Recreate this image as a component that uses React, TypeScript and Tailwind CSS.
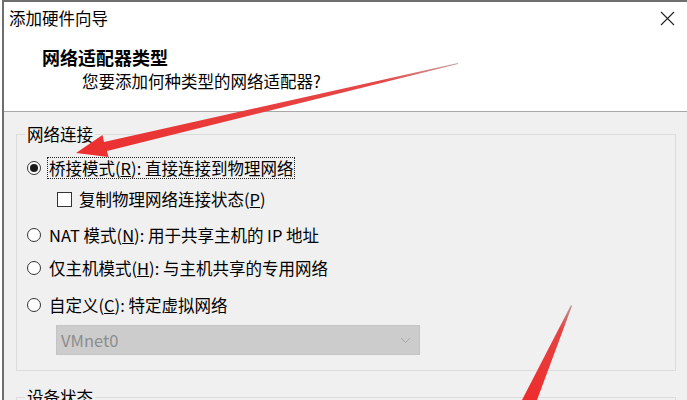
import React from 'react';

const Radio = ({ checked }: { checked?: boolean }) => (
  <span className="w-[14px] h-[14px] rounded-full border border-[#333] bg-white flex items-center justify-center shrink-0">
    {checked && <span className="w-[8px] h-[8px] rounded-full bg-[#1a1a1a]" />}
  </span>
);

const Arrows = () => (
  <svg className="absolute inset-0 pointer-events-none" width="687" height="400" viewBox="0 0 687 400">
    <defs>
      <linearGradient id="a1" x1="458" y1="63" x2="80" y2="150" gradientUnits="userSpaceOnUse">
        <stop offset="0" stopColor="#c9a0a0" />
        <stop offset="0.2" stopColor="#e54848" />
        <stop offset="1" stopColor="#ec2f2f" />
      </linearGradient>
      <linearGradient id="a2" x1="571" y1="305" x2="528" y2="400" gradientUnits="userSpaceOnUse">
        <stop offset="0" stopColor="#b79a9a" />
        <stop offset="0.25" stopColor="#e54343" />
        <stop offset="1" stopColor="#ee2c2c" />
      </linearGradient>
    </defs>
    {/* arrow pointing at bridge mode */}
    <polygon
      points="458,63 458,64 107,151 108.5,157 76,153 102.5,135 104,142"
      fill="url(#a1)"
    />
    {/* second arrow from bottom */}
    <polygon points="571,305 572,306 537,400 522,400" fill="url(#a2)" />
  </svg>
);

export default function App() {
  return (
    <div className="relative w-[687px] h-[400px] overflow-hidden bg-white text-black font-['Noto_Sans_CJK_SC','Noto_Sans',sans-serif]">
      <div className="ml-[2px] h-full border-l-2 border-t-2 border-[#6e6e6e] flex flex-col">
        {/* header */}
        <div className="h-[110px] bg-white border-b border-[#a8a8a8] shrink-0">
          <div className="h-[32px] flex items-center justify-between pl-[5px] pr-[12px]">
            <span className="text-[16.5px] leading-[20px]">添加硬件向导</span>
            <svg width="15" height="15" viewBox="0 0 15 15" className="mt-[1px]">
              <path d="M1 1 L14 14 M14 1 L1 14" stroke="#222" strokeWidth="1.1" />
            </svg>
          </div>
          <div className="pl-[38px] pt-[12px] text-[18px] leading-[22px] font-bold">网络适配器类型</div>
          <div className="pl-[78px] pt-[2px] text-[16.5px] leading-[22px]">您要添加何种类型的网络适配器?</div>
        </div>

        {/* body */}
        <div className="flex-1 bg-[#f0f0f0] pl-[12px] pr-[11px] pt-[12px] text-[16.5px] leading-[20px]">
          <fieldset className="border border-[#dcdcdc] pl-[10px] pb-[15px]">
            <legend className="ml-[-2px] px-[2px] bg-[#f0f0f0]">网络连接</legend>

            <div className="mt-[13px] h-[22px] flex items-center">
              <Radio checked />
              <span className="ml-[6px] px-[1px] border border-dotted border-[#222]">
                桥接模式(<span className="underline">R</span>): 直接连接到物理网络
              </span>
            </div>

            <div className="mt-[9px] h-[22px] flex items-center pl-[30px]">
              <span className="w-[15px] h-[15px] border border-[#333] bg-white shrink-0" />
              <span className="ml-[7px]">
                复制物理网络连接状态(<span className="underline">P</span>)
              </span>
            </div>

            <div className="mt-[14px] h-[22px] flex items-center">
              <Radio />
              <span className="ml-[8px]">
                NAT 模式(<span className="underline">N</span>): 用于共享主机的 IP 地址
              </span>
            </div>

            <div className="mt-[11px] h-[22px] flex items-center">
              <Radio />
              <span className="ml-[8px]">
                仅主机模式(<span className="underline">H</span>): 与主机共享的专用网络
              </span>
            </div>

            <div className="mt-[15px] h-[22px] flex items-center">
              <Radio />
              <span className="ml-[8px]">
                自定义(<span className="underline">C</span>): 特定虚拟网络
              </span>
            </div>

            <div className="mt-[9px] ml-[29px] w-[364px] h-[30px] bg-[#cccccc] border border-[#c4c4c4] flex items-center justify-between pl-[4px] pr-[8px]">
              <span className="text-[#8c8c8c]">VMnet0</span>
              <svg width="11" height="7" viewBox="0 0 11 7">
                <path d="M1 1 L5.5 5.5 L10 1" fill="none" stroke="#a6a6a6" strokeWidth="1" />
              </svg>
            </div>
          </fieldset>

          <fieldset className="mt-[16px] border border-[#dcdcdc] h-[60px]">
            <legend className="ml-[8px] px-[2px]">设备状态</legend>
          </fieldset>
        </div>
      </div>
      <Arrows />
    </div>
  );
}
